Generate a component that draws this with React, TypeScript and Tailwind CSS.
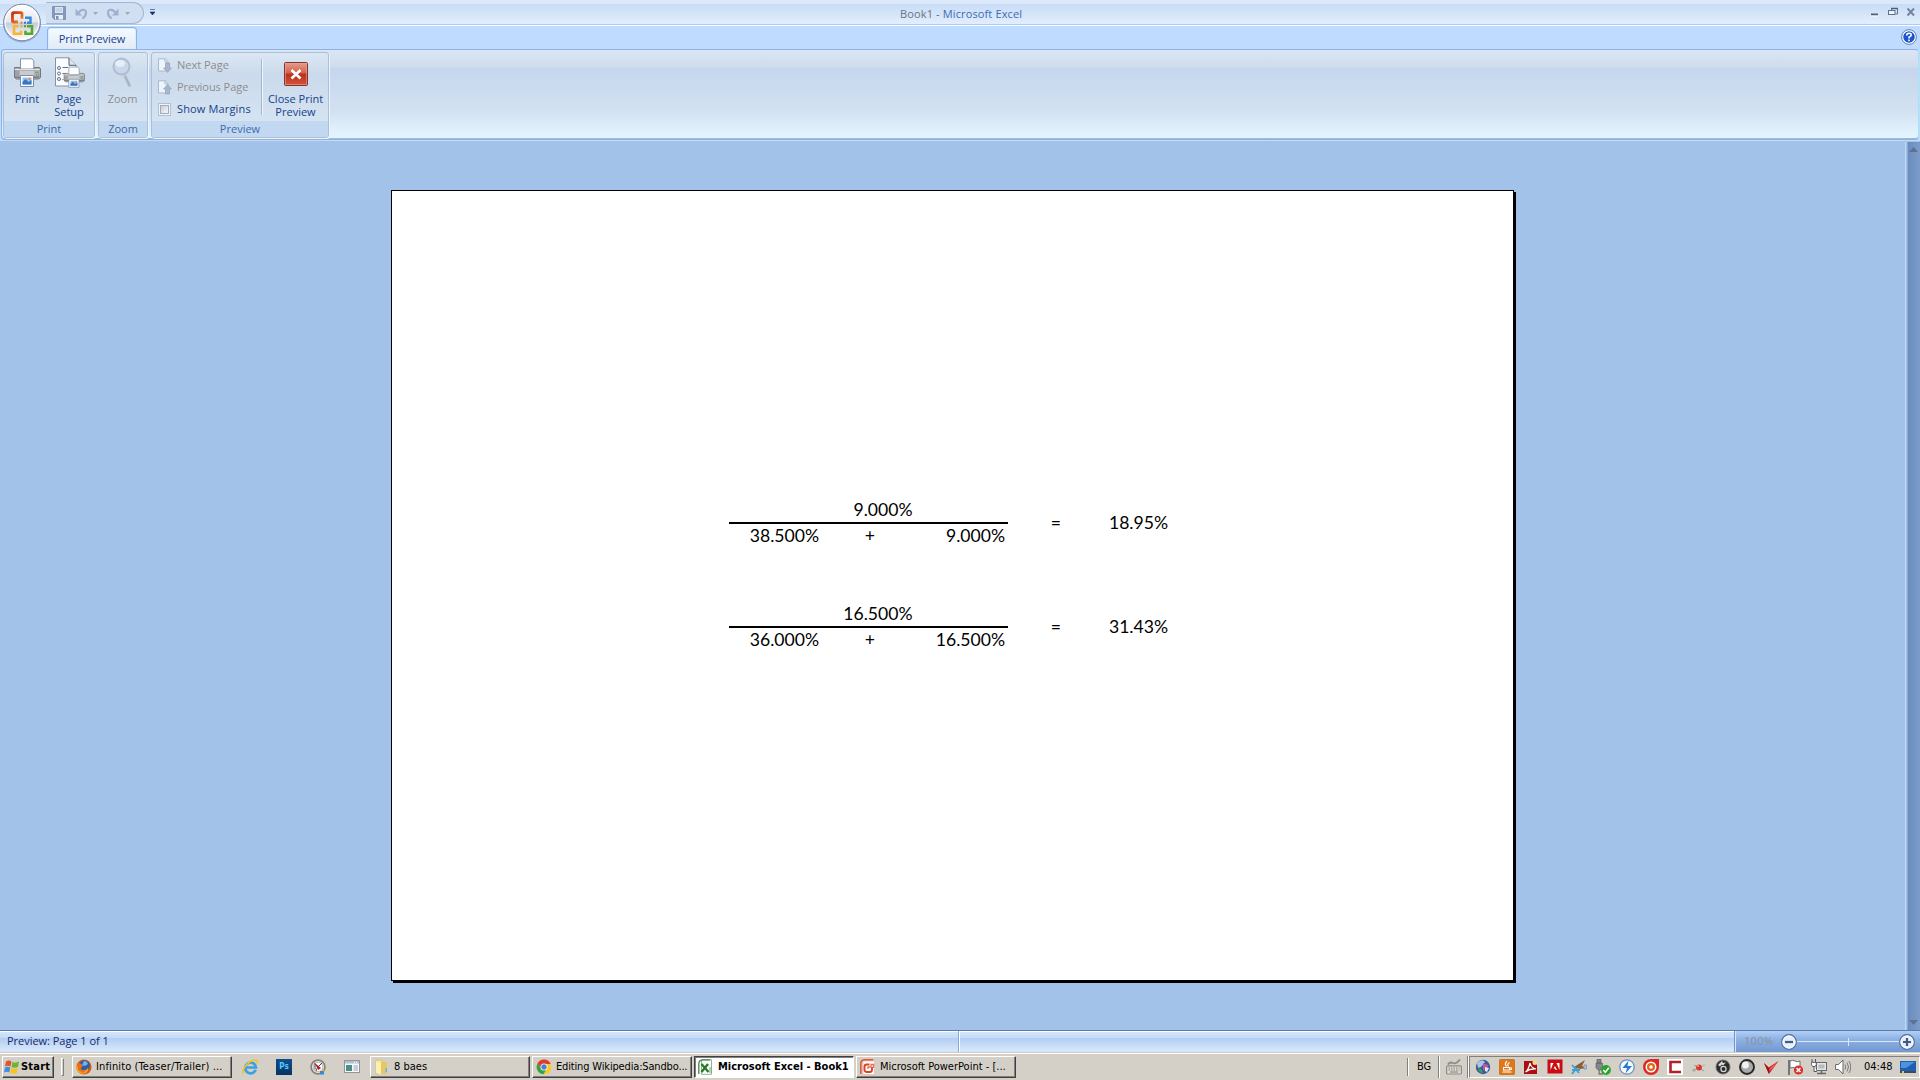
import React from "react";

const UI = "font-['Open_Sans',sans-serif] text-[11px]";
const TASK = "font-['DejaVu_Sans_Condensed','DejaVu_Sans',sans-serif] [font-stretch:condensed] text-[11px]";

function OfficeOrb() {
  return (
    <svg width="40" height="40" viewBox="0 0 40 40">
      <defs>
        <linearGradient id="orb" x1="0" y1="0" x2="0" y2="1">
          <stop offset="0" stopColor="#ffffff" />
          <stop offset="0.48" stopColor="#e3e7ee" />
          <stop offset="0.52" stopColor="#c5cddb" />
          <stop offset="1" stopColor="#ffffff" />
        </linearGradient>
        <linearGradient id="orbRed" x1="0" y1="0" x2="1" y2="1">
          <stop offset="0" stopColor="#c92d0c" />
          <stop offset="1" stopColor="#f58a1f" />
        </linearGradient>
      </defs>
      <circle cx="20" cy="20.5" r="19" fill="#8795ad" opacity="0.6" />
      <circle cx="20" cy="19.5" r="18.3" fill="url(#orb)" stroke="#7788a5" strokeWidth="1" />
      <circle cx="20" cy="19.5" r="16.8" fill="none" stroke="#ffffff" strokeWidth="1.3" opacity="0.8" />
      <g transform="translate(0 .7)">
        <path d="M20 15V10.300a1.300 1.300 0 0 0-1.300-1.300H11.800a1.300 1.300 0 0 0-1.300 1.300V17a1.300 1.300 0 0 0 1.300 1.300H16" fill="none" stroke="url(#orbRed)" strokeWidth="2.800" />
        <path d="M23 14h5.500v5h-3.500" fill="none" stroke="#3a86d8" strokeWidth="2.400" />
        <path d="M16.500 22.500h-4.500v7.500h7V27" fill="none" stroke="#fbb52a" strokeWidth="2.600" />
        <path d="M25 22.500h5v7.500h-6.500v-3" fill="none" stroke="#56a72c" strokeWidth="2.600" />
        <path d="M18.500 18h2v2h-2z" fill="#f07c22" />
        <path d="M22 18h2v2h-2z" fill="#2f78cd" />
        <path d="M18.500 21.500h2v2h-2z" fill="#f6a61c" />
        <path d="M22 21.500h2v2h-2z" fill="#4b9b28" />
      </g>
    </svg>
  );
}

function SaveIcon() {
  return (
    <svg width="14" height="14" viewBox="0 0 14 14">
      <path d="M.5.5h13v13h-11l-2-2z" fill="#8399be" stroke="#8095ba" />
      <rect x="3" y="1" width="8" height="6" fill="#dbe5f2" />
      <path d="M4 3h6M4 5h6" stroke="#b3c3da" />
      <rect x="3" y="9" width="8" height="4.500" fill="#e8eef7" />
      <rect x="4" y="10" width="2.500" height="3.500" fill="#7c91b6" />
    </svg>
  );
}

function UndoIcon({ flip = false }: { flip?: boolean }) {
  return (
    <svg width="13" height="13" viewBox="0 0 13 13" className={flip ? "-scale-x-100" : ""}>
      <path d="M3 6.500C5 2.500 10.500 1 11 5.500c.2 2.500-1.500 4.500-3.500 6" fill="none" stroke="#9fb1cd" strokeWidth="2.200" />
      <path d="M.5 1.500v7h6.500z" fill="#9fb1cd" />
    </svg>
  );
}

function Caret() {
  return (
    <svg width="5" height="3" viewBox="0 0 5 3">
      <path d="M0 0h5L2.500 3z" fill="#a3a9b2" />
    </svg>
  );
}

function PrinterArt() {
  return (
    <g>
      <path d="M7.500 11V.8h11.300l2 2V11z" fill="#fdfeff" stroke="#8794a8" />
      <path d="M1.500 9.500h5l1 2h13l1-2h5l1 1.500v8.500l-2 1.500h-22l-2-1.500V11z" fill="#aeb0b5" stroke="#73767e" />
      <path d="M1.500 11.500h25" stroke="#e0e1e4" />
      <path d="M7 13h14v5H7z" fill="#c9cbd0" />
      <path d="M1.500 18.500h25v1.500h-25z" fill="#7e8087" />
      <path d="M22.500 14.500h3" stroke="#5fb44b" strokeWidth="1.300" />
      <path d="M3 12.500v5.500M5 12.500v5.500M23.500 16v3M25.500 16v3" stroke="#85878e" strokeWidth=".7" />
      <path d="M7.500 17.500h13v11h-13z" fill="#ffffff" stroke="#7d8ca5" />
      <path d="M9.500 19.500h9v7h-9z" fill="#90c3ef" />
      <path d="M9.500 24l3-3 3 3 3-2v4.500h-9z" fill="#3577c6" />
      <circle cx="16.500" cy="21" r="1.200" fill="#ef8a43" />
    </g>
  );
}

function PrintIcon() {
  return (
    <svg width="28" height="30" viewBox="0 0 28 30">
      <PrinterArt />
    </svg>
  );
}

function PageSetupIcon() {
  return (
    <svg width="31" height="31" viewBox="0 0 31 31">
      <path d="M1.500.8h13.500l7 7.500V29H1.500z" fill="#fbfcff" stroke="#8592a8" />
      <path d="M15 .8v7.500h7" fill="#dce5f3" stroke="#4d5c76" />
      <circle cx="5" cy="11" r="1.500" fill="#fff" stroke="#5f6f8b" />
      <circle cx="5" cy="16.500" r="1.500" fill="#fff" stroke="#5f6f8b" />
      <circle cx="5" cy="22" r="1.500" fill="#fff" stroke="#5f6f8b" />
      <path d="M8.500 10.500h5.500M8.500 16.500h3M8.500 22.500h1" stroke="#5f6f8b" />
      <g transform="translate(9 9.500) scale(.78 .73)">
        <PrinterArt />
      </g>
    </svg>
  );
}

function ZoomIcon() {
  return (
    <svg width="21" height="31" viewBox="0 0 21 31">
      <path d="M12 17l5.500 11.500" stroke="#bdc7d5" strokeWidth="3.500" strokeLinecap="round" />
      <path d="M13.500 20l4 8.500" stroke="#a4aebd" strokeWidth="1.600" strokeLinecap="round" />
      <circle cx="9.500" cy="9.500" r="8" fill="#c9d7eb" stroke="#b0bccf" strokeWidth="2" />
      <ellipse cx="8" cy="6.500" rx="5" ry="3.500" fill="#e6eef8" />
    </svg>
  );
}

function PageArrowIcon({ up = false }: { up?: boolean }) {
  return (
    <svg width="15" height="15" viewBox="0 0 15 15">
      <path d="M1.500.8h7L11 3.500v9.500H1.500z" fill="#eef4fb" stroke="#a9b8cc" />
      <path d="M8 .8V4h3" fill="none" stroke="#a9b8cc" />
      <path d={up ? "M10.500 4.500l4 4.500h-2v5h-4V9h-2z" : "M10.500 14.500l4-4.500h-2V5h-4v5h-2z"} fill="#a7b6cb" stroke="#94a5bd" strokeWidth=".7" />
    </svg>
  );
}

function CloseIcon() {
  return (
    <svg width="24" height="24" viewBox="0 0 24 24">
      <defs>
        <linearGradient id="closeRed" x1="0" y1="0" x2="0" y2="1">
          <stop offset="0" stopColor="#e5a091" />
          <stop offset=".46" stopColor="#d2604a" />
          <stop offset=".5" stopColor="#b9301b" />
          <stop offset="1" stopColor="#d5553f" />
        </linearGradient>
      </defs>
      <rect x=".5" y=".5" width="23" height="23" rx="1" fill="url(#closeRed)" stroke="#80342c" />
      <rect x="1.500" y="1.500" width="21" height="21" fill="none" stroke="#e6a596" opacity=".6" />
      <path d="M7.500 8l9 8.500M16.500 8l-9 8.500" stroke="#fff" strokeWidth="2.600" />
    </svg>
  );
}

function Group({ title, className, children }: { title: string; className: string; children: React.ReactNode }) {
  return (
    <section className={`flex h-[86px] flex-col overflow-hidden rounded-[3px] border border-[#a9bfdb] bg-linear-to-b from-[#dce7f3] via-[#cbdaec] via-25% to-[#d8e6f3] shadow-[1px_1px_0_#edf5fc] ${className}`}>
      <div className="h-[68px]">{children}</div>
      <h2 className="flex h-[16px] items-center justify-center bg-[#c1d8f0] pt-px text-[#3e6aaa]">{title}</h2>
    </section>
  );
}

function Fraction({ top, left, right, result }: { top: string; left: string; right: string; result: string }) {
  return (
    <div className="flex h-[52px] items-center">
      <div className="w-[279px]">
        <div className="h-[25px] pr-[95.500px] text-right leading-[25px]">{top}</div>
        <div className="h-[2px] bg-black" />
        <div className="grid h-[25px] grid-cols-[90px_1fr_91px] pr-[3px] text-right leading-[23px]">
          <span>{left}</span>
          <span className="pr-[39px]">+</span>
          <span>{right}</span>
        </div>
      </div>
      <span className="w-[53px] pt-px text-right">=</span>
      <span className="w-[107px] text-right">{result}</span>
    </div>
  );
}

function TaskButton({ icon, label, active = false, className = "" }: { icon: React.ReactNode; label: string; active?: boolean; className?: string }) {
  return (
    <button
      className={`flex h-[22px] w-[160px] items-center gap-[4px] overflow-hidden whitespace-nowrap border pl-[3px] text-left text-black ${
        active
          ? "border-b-white border-r-white border-l-[#404040] border-t-[#404040] bg-white font-bold shadow-[inset_1px_1px_0_#808080]"
          : "border-b-[#404040] border-r-[#404040] border-l-white border-t-white bg-[#d4d0c8] shadow-[inset_-1px_-1px_0_#808080]"
      } ${className}`}
    >
      <span className="shrink-0">{icon}</span>
      <span>{label}</span>
    </button>
  );
}

const Icon16 = ({ children }: { children: React.ReactNode }) => (
  <svg width="16" height="16" viewBox="0 0 16 16" className="block shrink-0">
    {children}
  </svg>
);

const WindowsFlag = () => (
  <Icon16>
    <path d="M2 2.500q3-2 5.500 0L6.500 7.500q-3-1.500-5.500 0z" fill="#e5532a" />
    <path d="M8.500 3q3 1.500 6.500-.5L14 8q-3.500 1.500-6.500 0z" fill="#6cb52d" />
    <path d="M1 8.500q2.500-1.500 5.300 0L5.300 13.500Q2.500 12 0 13.500z" fill="#3f8ee0" />
    <path d="M7.300 9q3 1.500 6.500 0l-1 5q-3.500 1.500-6.500-.2z" fill="#fbc21d" />
  </Icon16>
);

const Firefox = () => (
  <Icon16>
    <circle cx="8" cy="8" r="7.600" fill="#d65a13" />
    <circle cx="8.500" cy="6.500" r="5.300" fill="#2b5da8" />
    <path d="M8 2q3 0 4 3l-3 2-3-1z" fill="#6fb5e8" />
    <path d="M1 3q0 8 6 8.500 4 0 5-3 1 4-3 6-8 1.500-8.800-6z" fill="#f5a01e" />
    <path d="M2 4l3.500 1L7 7.500 4.500 9 6 11l4 .5-3 2.500-5-3z" fill="#e8701a" />
  </Icon16>
);

const InternetExplorer = () => (
  <Icon16>
    <path d="M13.700 10.800A5.400 5.400 0 1 1 14 8.500H4" fill="none" stroke="#3ba1e0" strokeWidth="2.700" />
    <path d="M1.500 14.500C-1 11 8-1 15 1.500c1 .6.500 2-.2 3" fill="none" stroke="#f3c326" strokeWidth="1.600" />
  </Icon16>
);

const Photoshop = () => (
  <div className="flex size-4 items-center justify-center bg-linear-to-b from-[#0d4f8c] to-[#063562] text-[8px] font-bold leading-none text-[#5cc8ff]">Ps</div>
);

const Compass = () => (
  <Icon16>
    <circle cx="8" cy="8" r="6.900" fill="#f4f2ee" stroke="#85827e" strokeWidth="1.800" />
    <circle cx="8" cy="8" r="4.800" fill="#fff" stroke="#a9a5a0" strokeWidth=".8" />
    <path d="M3.500 3l7.500 6-2.500 2z" fill="#d4131a" />
    <path d="M12 4L7.500 8.500 6 12M5 4.500v6" stroke="#444" fill="none" />
    <path d="M12 9l3.500 4H12z" fill="#f3c326" />
    <path d="M10 12h4v3.500h-4z" fill="#3887dd" />
  </Icon16>
);

const WindowIcon = () => (
  <Icon16>
    <rect x=".5" y="1.500" width="15" height="12" fill="#f6f8fb" stroke="#8f96a3" />
    <path d="M1 2h14v2.500H1z" fill="#b5bece" />
    <path d="M2 6h6v6H2z" fill="#4d8e82" />
    <path d="M9.500 7h4.500M9.500 9h4.500M9.500 11h4.500" stroke="#9aa4b5" />
    <path d="M10 3.300h1M12 3.300h1" stroke="#fff" />
  </Icon16>
);

const Folder = () => (
  <Icon16>
    <path d="M2 1h6l1 1v12l-7 1z" fill="#f5e192" stroke="#d1b352" strokeWidth=".6" />
    <path d="M7 3h6v12l-6-1z" fill="#e6c862" />
    <path d="M2 2l5 2v11.500l-5-1.500z" fill="#fbf0b4" />
    <path d="M11.500 9h1.500v4h-1.500z" fill="#67b3e3" />
  </Icon16>
);

const Chrome = () => (
  <Icon16>
    <circle cx="8" cy="8" r="7.300" fill="#fbcb22" />
    <path d="M1.500 4.500A7.300 7.300 0 0 1 14.700 5H8L5 9z" fill="#df3d30" />
    <path d="M1.500 4.500A7.300 7.300 0 0 0 7.500 15.300L10.500 10 5 9z" fill="#36a34b" />
    <circle cx="8" cy="8" r="3.500" fill="#fff" />
    <circle cx="8" cy="8" r="2.700" fill="#4385d6" />
  </Icon16>
);

const ExcelIcon = () => (
  <Icon16>
    <path d="M3.500.8h10v14.500h-10z" fill="#fff" stroke="#93b593" />
    <path d="M.8 15V5q0-4 3.500-4.200h8" fill="none" stroke="#43883c" strokeWidth="1.300" />
    <path d="M11 9h3M11 11h3M11 13h3" stroke="#77a873" />
    <path d="M3.500 5l7 8M10 5l-6.500 8" stroke="#287a2b" strokeWidth="2.300" />
  </Icon16>
);

const PowerPointIcon = () => (
  <Icon16>
    <path d="M3 2h11.500v13.500H3z" fill="#fff" stroke="#e9b5a8" strokeWidth=".7" />
    <path d="M.8 15V5q0-4 3.500-4.200h9" fill="none" stroke="#e25433" strokeWidth="1.500" />
    <path d="M9.500 5.500H6.500Q4.500 5.500 4.500 8v2.500q0 2.500 2.500 2.500h3q2 0 2-2.500V8" fill="none" stroke="#d84425" strokeWidth="1.900" />
    <path d="M8 10V8h3V5.500h2.500V9" fill="none" stroke="#e8704f" strokeWidth="1.300" />
  </Icon16>
);

const KeyboardIcon = () => (
  <Icon16>
    <path d="M2 5.500q2-3 5-1.500t7-3.500" fill="none" stroke="#8d8b87" strokeWidth="1.800" />
    <rect x=".6" y="6.800" width="14.800" height="8.200" rx="1" fill="#dedbd5" stroke="#8d8b87" strokeWidth="1.200" />
    <path d="M2.500 9h11M2.500 11h11" stroke="#7f7d79" strokeDasharray="1.500 1" />
    <path d="M4 13h8" stroke="#7f7d79" />
  </Icon16>
);

const trayIcons: React.ReactNode[] = [
  <>
    <circle cx="8" cy="8" r="7.200" fill="#375a98" />
    <path d="M2 4q5-5 8-1L6 8 3 9z" fill="#a9c8e5" />
    <path d="M3 10q4-2 5 4-4 0-5-4z" fill="#3d9b4f" />
    <path d="M8 4l5 2-1 4-4 1z" fill="#b956c0" />
    <path d="M10 8l4 1-2 4-2-1z" fill="#e2e6ed" />
    <path d="M9 6h2v2H9z" fill="#f04a4a" />
  </>,
  <>
    <rect x=".3" y=".3" width="15.400" height="15.400" rx="1.500" fill="#e07818" stroke="#b65c0c" strokeWidth=".6" />
    <path d="M8 2q-3 3-.5 5.500M10.500 3.500q-3 2-1 4" fill="none" stroke="#fff" strokeWidth="1.200" />
    <path d="M4.500 8.500h6v2.500h-6zM10.500 9h2v1.500h-2M3.500 13h9" fill="none" stroke="#fff" strokeWidth="1.100" />
  </>,
  <>
    <path d="M1 2h13v13H1z" fill="#a90e12" />
    <path d="M2.500 13q3-2 4.500-9 1 5 6 6-6-.5-10.500 3z" fill="none" stroke="#fff" strokeWidth="1.200" />
    <circle cx="12" cy="3.500" r="2.500" fill="#f0d78a" />
  </>,
  <>
    <rect x=".5" y=".5" width="15" height="14" fill="#c90d13" />
    <path d="M3.500 11V4h3zM12.500 11V4h-3zM8 7l2 4H8.700L8 9.500H6.500z" fill="#fff" />
  </>,
  <>
    <path d="M1 6l7 8M8 6l-7 9M1 11h8" stroke="#37a2d8" strokeWidth="1.800" />
    <path d="M3 8l11-7-3 6 4 2-6 1z" fill="#8b5d3a" />
    <path d="M13 6h2.500v4H13z" fill="#b8c8da" stroke="#7088a8" strokeWidth=".7" />
  </>,
  <>
    <path d="M2 0h4v4H2zM1 4h6.500v5L6 11H3L1 9z" fill="#83868a" stroke="#55585c" strokeWidth=".6" />
    <path d="M4.200 11v4h4" fill="none" stroke="#777" strokeWidth="1.300" />
    <circle cx="11" cy="11" r="4.900" fill="#28a52e" />
    <path d="M8.300 11l2 2.300 3.500-4.500" fill="none" stroke="#fff" strokeWidth="1.500" />
  </>,
  <>
    <circle cx="8" cy="8" r="7.200" fill="#f4f8fc" stroke="#6c91b9" strokeWidth="1.300" />
    <path d="M9.500 1.500L3.500 9H8l-1.500 5.500L13 7H8.500z" fill="#2a7ad3" />
  </>,
  <>
    <path d="M0 8a8 8 0 0 1 8-8h8v8A8 8 0 1 1 0 8z" fill="#dc2a20" />
    <circle cx="8" cy="8" r="5.500" fill="#fff" />
    <circle cx="8" cy="8" r="4" fill="#e7641f" />
    <circle cx="8" cy="8" r="1.700" fill="#fff" />
  </>,
  <>
    <path d="M0 0h16v16H0z" fill="#fff" />
    <path d="M14 3H3.500v10H14" fill="none" stroke="#b31f2b" strokeWidth="2.600" />
  </>,
  <>
    <path d="M2 11.500L14 6M3 6l10 6" stroke="#a8a5a0" strokeWidth="1.200" />
    <circle cx="8" cy="8.500" r="2.900" fill="#d8382d" />
    <circle cx="3" cy="11" r="1.600" fill="#aaa7a2" />
    <circle cx="12.500" cy="6.500" r="1.600" fill="#c5c2be" />
    <circle cx="7" cy="7" r="1.100" fill="#f39b91" />
  </>,
  <>
    <circle cx="8" cy="8" r="7" fill="#2b2c2d" stroke="#74716d" />
    <circle cx="8.500" cy="10" r="2.600" fill="none" stroke="#d8d8d8" strokeWidth="1.200" />
    <path d="M3 6l4-4 1 2 3-.500-3 3-1-1-2 2z" fill="#d9d9d9" />
  </>,
  <>
    <circle cx="8" cy="8" r="7" fill="#a9aaab" stroke="#262728" strokeWidth="1.900" />
    <circle cx="6.500" cy="6" r="3.400" fill="#f2f2f2" />
  </>,
  <>
    <path d="M1 4l4.500 4.500L15.500 2 6 15z" fill="#cf1e20" />
    <path d="M7 9l8-6.500L9.500 9 6 12z" fill="#f06c62" />
    <path d="M1 4l5 11V9z" fill="#9c1013" />
  </>,
  <>
    <path d="M2 1v15" stroke="#55585c" strokeWidth="1.500" />
    <path d="M3 2q3-1.500 5 0t5 0v7q-3 1-5 0t-5 0z" fill="#fff" stroke="#6b6e72" />
    <circle cx="11.500" cy="11" r="4.600" fill="#dc312b" />
    <path d="M9.500 9l4 4M13.500 9l-4 4" stroke="#fff" strokeWidth="1.500" />
  </>,
  <>
    <rect x="5.500" y="3.500" width="10" height="8" fill="#e3e5e7" stroke="#65686c" />
    <rect x="7.500" y="5.500" width="6" height="4" fill="#b7bbc0" />
    <path d="M10.500 12v2M6 14.500h9" stroke="#65686c" strokeWidth="1.500" />
    <path d="M1 0v3M4.500 0v3M.3 3.300h5v2.500L4 7.500H2L.3 6zM3 7v5.500h3" fill="#fff" stroke="#55585c" />
  </>,
  <>
    <path d="M.6 5.500h3L8 1v14l-4.400-4.500h-3z" fill="#fff" stroke="#65686c" />
    <path d="M10 5.500q1.500 2.500 0 5M12 3.500q3 4.500 0 9M14 2q3.500 6 0 12" fill="none" stroke="#777a7e" />
  </>,
];

function TitleBar() {
  return (
    <header className="flex h-[26px] border-b border-white bg-linear-to-b from-[#dbe9fb] from-[14%] via-[#c9ddf6] via-[18%] to-[#e3effd] shadow-[inset_0_-1px_0_#a8cdf5]">
      <div className="w-[46px]" />
      <div className="mt-[2px] flex h-[22px] w-[98px] items-center rounded-r-full border border-[#a5b8d3] border-l-transparent bg-[#d0dff2] pl-[5px]">
        <SaveIcon />
        <span className="ml-[9px]"><UndoIcon /></span>
        <span className="ml-[5px]"><Caret /></span>
        <span className="ml-[8px]"><UndoIcon flip /></span>
        <span className="ml-[6px]"><Caret /></span>
      </div>
      <svg width="5" height="7" viewBox="0 0 5 7" className="ml-[6px] mt-[9px]">
        <path d="M0 .5h5M0 3h5L2.500 6z" fill="#19325f" stroke="#19325f" strokeWidth=".6" />
      </svg>
      <h1 className="flex h-[26px] flex-1 items-center pl-[745px] pt-[2px] tracking-[0.13px] text-[#3e6ab2]">
        <span className="mr-[3px] text-[#69737f]">Book1</span> - Microsoft Excel
      </h1>
      <svg width="46" height="12" viewBox="0 0 46 12" className="mr-[4px] mt-[6px]" fill="none">
        <path d="M1 8.500h7" stroke="#555e6c" strokeWidth="2" />
        <path d="M1 10h7" stroke="#fff" />
        <path d="M21.500 4.500V2.500h6v5.500h-2" stroke="#60728f" />
        <path d="M21 2.500h7" stroke="#555e6c" strokeWidth="1.500" />
        <rect x="18.500" y="4.500" width="6.500" height="4" fill="#eef4fc" stroke="#60728f" />
        <path d="M37.500 2.500l6.500 7M44 2.500l-6.500 7" stroke="#7584a0" strokeWidth="2" />
      </svg>
    </header>
  );
}

function Ribbon() {
  return (
    <div className="h-[115px] bg-[#bfdbff]">
      <div className="flex h-[23px] items-end justify-between pr-[3px]">
        <div className="ml-[47px] flex h-[22px] w-[90px] items-center justify-center rounded-t-[4px] border border-b-0 border-[#8db2e3] bg-linear-to-b from-[#f5faff] to-[#e1ebf7] pt-[2px] tracking-[-0.1px] text-[#15428b] shadow-[inset_0_0_0_1px_#d5f0fb]">
          Print Preview
        </div>
        <svg width="16" height="16" viewBox="0 0 16 16" className="mb-[4px]">
          <circle cx="8" cy="8" r="6.400" fill="#1b55cf" stroke="#fff" strokeWidth="1.300" />
          <circle cx="8" cy="8" r="7.400" fill="none" stroke="#526f9e" strokeWidth=".8" />
          <path d="M5.700 6.500Q5.700 4.200 8 4.200t2.200 2Q10 7.500 8 8.300v1.200M8 10.500v1.700" stroke="#fff" strokeWidth="1.600" fill="none" />
        </svg>
      </div>
      <div className="mx-px flex h-[90px] gap-[3px] rounded-[4px] border border-b-[#8fbfd9] border-l-[#8db2e3] border-r-[#a6e3ee] border-t-[#8db2e3] bg-[linear-gradient(#dbe6f4_0,#cfdcec_17px,#c5d6ed_18px,#d2e1f1_60px,#e5f5ff_100%)] px-px pt-[2px] shadow-[0_1px_0_#9cafce]">
        <Group title="Print" className="w-[92px]">
          <div className="flex pt-[4px] text-[#15428b]">
            <div className="flex w-[46px] flex-col items-center pt-px">
              <PrintIcon />
              <span className="mt-[4px] leading-[13px]">Print</span>
            </div>
            <div className="flex w-[38px] flex-col items-center">
              <PageSetupIcon />
              <span className="mt-[4px] text-center leading-[13px]">Page<br />Setup</span>
            </div>
          </div>
        </Group>
        <Group title="Zoom" className="w-[50px]">
          <div className="flex flex-col items-center pt-[4px] pr-px text-[#8d8d8d]">
            <ZoomIcon />
            <span className="mt-[4px] leading-[13px]">Zoom</span>
          </div>
        </Group>
        <Group title="Preview" className="w-[178px]">
          <div className="flex pl-[5px]">
            <div className="w-[104px] pt-px text-[#8d8d8d]">
              <div className="flex h-[22px] items-center gap-[5px] whitespace-nowrap"><PageArrowIcon />Next Page</div>
              <div className="flex h-[22px] items-center gap-[5px] whitespace-nowrap tracking-[-0.05px]"><PageArrowIcon up />Previous Page</div>
              <div className="flex h-[22px] items-center gap-[6px] whitespace-nowrap tracking-[0.15px] text-[#15428b]">
                <span className="ml-px flex size-[13px] items-center justify-center border border-[#abc1de] bg-[#f4f4f4]">
                  <span className="size-[9px] border border-[#a2acb9] bg-linear-to-br from-[#cbcfd5] to-[#f6f6f6]" />
                </span>
                Show Margins
              </div>
            </div>
            <div className="mt-[6px] h-[56px] w-[2px] border-l border-r border-l-[#9fb6d4] border-r-[#eef5fc]" />
            <div className="flex w-[65px] flex-col items-center pt-[9px] text-[#15428b]">
              <CloseIcon />
              <span className="mt-[6px] whitespace-nowrap text-center leading-[13px]">Close Print<br />Preview</span>
            </div>
          </div>
        </Group>
      </div>
    </div>
  );
}

function Workspace() {
  return (
    <main className="flex h-[889px] bg-[#a3c2ea]">
      <div className="flex-1 pl-[391px] pt-[49px]">
        <div className="flex h-[793px] w-[1125px] pb-[2px] pr-[2px] shadow-[inset_-2px_0_0_#000,inset_0_-2px_0_#000] [clip-path:polygon(0_0,1123px_0,1123px_2px,100%_2px,100%_100%,2px_100%,2px_791px,0_791px)]">
          <div className="w-full border border-black bg-white pl-[337px] pt-[306px] font-['Lato',sans-serif] text-[17.6px] text-black">
            <Fraction top="9.000%" left="38.500%" right="9.000%" result="18.95%" />
            <div className="h-[52px]" />
            <Fraction top="16.500%" left="36.000%" right="16.500%" result="31.43%" />
          </div>
        </div>
      </div>
      <div className="mt-px flex w-[15px] flex-col items-center justify-between border-l border-[#bed7f5] bg-linear-to-r from-[#a3c2ea] from-[8%] via-[#6b8dbd] via-[14%] to-[#7c9dcb] py-[5px] pl-px">
        <svg width="9" height="5" viewBox="0 0 9 5"><path d="M0 5h9L4.500 0z" fill="#5f6f93" /></svg>
        <svg width="9" height="5" viewBox="0 0 9 5"><path d="M0 0h9L4.500 5z" fill="#5f6f93" /></svg>
      </div>
    </main>
  );
}

function ZoomKnob({ plus = false }: { plus?: boolean }) {
  return (
    <svg width="16" height="16" viewBox="0 0 16 16" className="shrink-0">
      <circle cx="8" cy="8" r="7.300" fill="#e5eefa" stroke="#4e6d9c" strokeWidth="1.200" />
      <circle cx="8" cy="8" r="6" fill="none" stroke="#fff" />
      <path d={plus ? "M4 8h8M8 4v8" : "M4 8h8"} stroke="#425b80" strokeWidth="2.200" />
    </svg>
  );
}

function StatusBar() {
  return (
    <div className="flex h-[22px] border-t border-[#567db1] bg-[linear-gradient(#fff_0,#fff_1px,#d4e4fb_1px,#c5daf8_7px,#b0cdf3_7px,#dae8fb_20px,#c7dbf5_100%)]">
      <div className="flex w-[958px] items-center pb-px pl-[7px] tracking-[-0.03px] text-[#15296b]">Preview: Page 1 of 1</div>
      <div className="w-[776px] border-l border-[#8aabda] shadow-[inset_1px_0_0_#fff]" />
      <div className="flex flex-1 items-center border-l border-[#6e94c9] bg-linear-to-b from-[#b3cff5] via-[#8db1e3] via-40% to-[#7398cf] pl-[9px] shadow-[inset_1px_0_0_#d6e6fa]">
        <span className="w-[37px] pb-px tracking-[0.3px] text-[#8a8f9c]">100%</span>
        <ZoomKnob />
        <div className="flex h-px flex-1 items-center justify-center bg-[#d9e7fa]"><span className="h-[8px] w-px bg-[#d9e7fa]" /></div>
        <ZoomKnob plus />
        <span className="w-[5px]" />
      </div>
    </div>
  );
}

const Groove = ({ className = "" }: { className?: string }) => (
  <span className={`w-[2px] border-l border-r border-l-[#808080] border-r-white ${className}`} />
);

function Taskbar() {
  return (
    <footer className={`flex h-[28px] items-start bg-[#d4d0c8] pt-[4px] text-black shadow-[inset_0_1px_0_#d4d0c8,inset_0_2px_0_#fff] ${TASK}`}>
      <button className="ml-[2px] flex h-[22px] w-[52px] items-center gap-[1px] border border-b-[#404040] border-l-white border-r-[#404040] border-t-white pl-px font-bold shadow-[inset_-1px_-1px_0_#808080]">
        <WindowsFlag />
        <span className="tracking-[0.2px]">Start</span>
      </button>
      <span className="ml-[7px] mt-[2px] h-[18px] w-[3px] border border-b-[#808080] border-l-white border-r-[#808080] border-t-white" />
      <TaskButton className="ml-[8px] tracking-[0.12px]" icon={<Firefox />} label="Infinito (Teaser/Trailer) ..." />
      <div className="ml-[10px] mr-[10px] mt-[3px] flex gap-[18px]">
        <InternetExplorer />
        <Photoshop />
        <Compass />
        <WindowIcon />
      </div>
      <TaskButton icon={<Folder />} label="8 baes" />
      <TaskButton className="ml-[2px] tracking-[-0.16px]" icon={<Chrome />} label="Editing Wikipedia:Sandbo..." />
      <TaskButton className="ml-[2px]" active icon={<ExcelIcon />} label="Microsoft Excel - Book1" />
      <TaskButton className="ml-[2px]" icon={<PowerPointIcon />} label="Microsoft PowerPoint - [..." />
      <div className="ml-auto flex h-[22px] w-[513px] items-center">
        <Groove className="h-[18px]" />
        <span className="w-[29px] pl-[8px]">BG</span>
        <Groove className="h-[22px]" />
        <span className="ml-[6px] mr-[5px]"><KeyboardIcon /></span>
        <Groove className="h-[22px]" />
        <div className="flex h-[22px] flex-1 items-center gap-[8px] border border-b-white border-l-[#808080] border-r-white border-t-[#808080] pl-[5px]">
          {trayIcons.map((art, i) => (
            <Icon16 key={i}>{art}</Icon16>
          ))}
          <span className="ml-[5px] w-[28px]">04:48</span>
          <Icon16>
            <path d="M0 2h16v10H0z" fill="#1c5fb5" />
            <path d="M1 3h14L6 9H1z" fill="#4b95df" />
            <path d="M0 12h16v2H0z" fill="#3f4a5b" />
            <path d="M2 12h2v2H2z" fill="#efc33a" />
          </Icon16>
        </div>
      </div>
    </footer>
  );
}

export default function App() {
  return (
    <div className={`relative flex h-[1080px] w-[1920px] flex-col overflow-hidden ${UI}`}>
      <TitleBar />
      <Ribbon />
      <Workspace />
      <StatusBar />
      <Taskbar />
      <div className="absolute left-[2px] top-[3px]">
        <OfficeOrb />
      </div>
    </div>
  );
}
